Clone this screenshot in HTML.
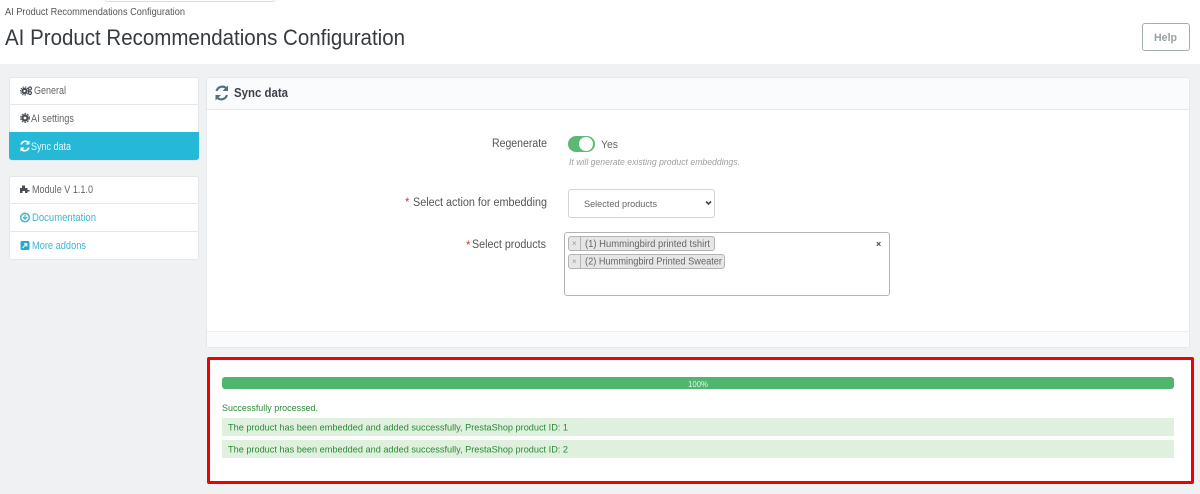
<!DOCTYPE html>
<html><head><meta charset="utf-8"><style>
html,body{margin:0;padding:0;width:1200px;height:494px;overflow:hidden;background:#eff1f2}
body{position:relative;font-family:"Liberation Sans",sans-serif;filter:blur(.35px)}
.b{position:absolute;box-sizing:border-box}
svg.t{position:absolute;left:0;top:0}
text{font-family:"Liberation Sans",sans-serif}
</style></head><body>
<div class="b" style="left:0;top:0;width:1200px;height:64px;background:#fff"></div>
<div class="b" style="left:105px;top:-3px;width:170px;height:5px;border:1px solid #d8e0dc;border-radius:3px"></div>
<div class="b" style="left:1142px;top:23px;width:48px;height:28px;border:1px solid #a3adae;border-radius:3px;background:#fff"></div>

<div class="b" style="left:9px;top:77px;width:190px;height:84px;background:#fff;border:1px solid #e4e8ea;border-radius:3px"></div>
<div class="b" style="left:10px;top:104px;width:188px;height:1px;background:#e4e8ea"></div>
<div class="b" style="left:9px;top:132px;width:190px;height:28px;background:#25b9d7;border-radius:0 0 3px 3px"></div>

<div class="b" style="left:9px;top:176px;width:190px;height:84px;background:#fff;border:1px solid #e4e8ea;border-radius:3px"></div>
<div class="b" style="left:10px;top:203px;width:188px;height:1px;background:#e4e8ea"></div>
<div class="b" style="left:10px;top:231px;width:188px;height:1px;background:#e4e8ea"></div>

<div class="b" style="left:206px;top:77px;width:984px;height:271px;background:#fff;border:1px solid #e4e8ea;border-radius:3px"></div>
<div class="b" style="left:207px;top:78px;width:982px;height:32px;background:#fafbfc;border-bottom:1px solid #e4e8ea"></div>
<div class="b" style="left:207px;top:331px;width:982px;height:16px;background:#fafbfc;border-top:1px solid #e9eeef"></div>

<div class="b" style="left:568px;top:136px;width:27px;height:16px;background:#5cb874;border-radius:8px"></div>
<div class="b" style="left:579px;top:137px;width:14px;height:14px;background:#fff;border-radius:50%"></div>
<div class="b" style="left:568px;top:189px;width:147px;height:29px;background:#fff;border:1px solid #cfd4d6;border-radius:3px"></div>
<div class="b" style="left:564px;top:232px;width:326px;height:64px;background:#fff;border:1px solid #b4b4b4;border-radius:3px"></div>
<div class="b" style="left:568px;top:236px;width:147px;height:15px;background:#e6e6e6;border:1px solid #b4b4b4;border-radius:3px"></div>
<div class="b" style="left:580px;top:236px;width:1px;height:15px;background:#b4b4b4"></div>
<div class="b" style="left:568px;top:254px;width:157px;height:15px;background:#e6e6e6;border:1px solid #b4b4b4;border-radius:3px"></div>
<div class="b" style="left:580px;top:254px;width:1px;height:15px;background:#b4b4b4"></div>

<div class="b" style="left:207px;top:357px;width:987px;height:127px;background:#fff;border:3px solid #f00000;border-radius:2px"></div>
<div class="b" style="left:222px;top:377px;width:952px;height:12px;background:#4fb56f;border-radius:3px"></div>
<div class="b" style="left:222px;top:418px;width:952px;height:18px;background:#dff0df"></div>
<div class="b" style="left:222px;top:440px;width:952px;height:18px;background:#dff0df"></div>

<svg class="t" width="1200" height="494" viewBox="0 0 1200 494">
<text x="5" y="15" font-size="10" fill="#555" textLength="180" lengthAdjust="spacingAndGlyphs">AI Product Recommendations Configuration</text>
<text x="5" y="45" font-size="22.500" fill="#363a41" textLength="400" lengthAdjust="spacingAndGlyphs">AI Product Recommendations Configuration</text>
<text x="1154" y="41" font-size="11" font-weight="bold" fill="#98a2a4" textLength="23" lengthAdjust="spacingAndGlyphs">Help</text>

<text x="34" y="94" font-size="11" fill="#666" textLength="32" lengthAdjust="spacingAndGlyphs">General</text>
<text x="31" y="122" font-size="11" fill="#666" textLength="43" lengthAdjust="spacingAndGlyphs">AI settings</text>
<text x="31" y="150" font-size="11" fill="#e8f8fb" textLength="40" lengthAdjust="spacingAndGlyphs">Sync data</text>
<text x="32" y="193" font-size="11" fill="#666" textLength="61" lengthAdjust="spacingAndGlyphs">Module V 1.1.0</text>
<text x="32" y="221" font-size="11" fill="#3fb5d3" textLength="64" lengthAdjust="spacingAndGlyphs">Documentation</text>
<text x="32" y="249" font-size="11" fill="#3fb5d3" textLength="54" lengthAdjust="spacingAndGlyphs">More addons</text>

<text x="234" y="97" font-size="12.500" font-weight="bold" fill="#3c4148" textLength="54" lengthAdjust="spacingAndGlyphs">Sync data</text>

<text x="492" y="147" font-size="11.500" fill="#555" textLength="55" lengthAdjust="spacingAndGlyphs">Regenerate</text>
<text x="601" y="148" font-size="11" fill="#666" textLength="17" lengthAdjust="spacingAndGlyphs">Yes</text>
<text x="569" y="165" font-size="9" font-style="italic" fill="#a0a0a0" textLength="171" lengthAdjust="spacingAndGlyphs">It will generate existing product embeddings.</text>
<text x="405" y="206" font-size="11.500" fill="#d9333f">*</text>
<text x="413" y="206" font-size="11.500" fill="#555" textLength="134" lengthAdjust="spacingAndGlyphs">Select action for embedding</text>
<text x="584" y="207" font-size="9.500" fill="#666" textLength="73" lengthAdjust="spacingAndGlyphs">Selected products</text>
<path d="M706 201.500l2.500 2.500 2.500-2.500" fill="none" stroke="#444" stroke-width="1.600"/>
<text x="466" y="249" font-size="11.500" fill="#d9333f">*</text>
<text x="472" y="248" font-size="11.500" fill="#555" textLength="74" lengthAdjust="spacingAndGlyphs">Select products</text>
<text x="572" y="246" font-size="8" fill="#999">×</text>
<text x="585" y="247" font-size="10" fill="#666" textLength="125" lengthAdjust="spacingAndGlyphs">(1) Hummingbird printed tshirt</text>
<text x="572" y="264" font-size="8" fill="#999">×</text>
<text x="585" y="264.500" font-size="10" fill="#666" textLength="137" lengthAdjust="spacingAndGlyphs">(2) Hummingbird Printed Sweater</text>
<text x="876" y="247" font-size="9" font-weight="bold" fill="#444">×</text>

<text x="688" y="387" font-size="8.500" fill="#e6f5ea" textLength="20" lengthAdjust="spacingAndGlyphs">100%</text>
<text x="222" y="411" font-size="9.500" fill="#2a8a33" textLength="96" lengthAdjust="spacingAndGlyphs">Successfully processed.</text>
<text x="228" y="430.500" font-size="9.500" fill="#2a8a33" textLength="340" lengthAdjust="spacingAndGlyphs">The product has been embedded and added successfully, PrestaShop product ID: 1</text>
<text x="228" y="452.500" font-size="9.500" fill="#2a8a33" textLength="340" lengthAdjust="spacingAndGlyphs">The product has been embedded and added successfully, PrestaShop product ID: 2</text>

<!-- General: gears -->
<g fill="#4a4f55">
<circle cx="24.500" cy="91" r="3.200"/><circle cx="24.500" cy="91" r="4" fill="none" stroke="#4a4f55" stroke-width="1" stroke-dasharray="1.400 1"/>
<circle cx="30" cy="88.500" r="1.500" fill="none" stroke="#4a4f55" stroke-width="1.200"/>
<circle cx="30" cy="93" r="1.500" fill="none" stroke="#4a4f55" stroke-width="1.200"/>
</g>
<circle cx="24.500" cy="91" r="1.100" fill="#fff"/>
<!-- AI settings: gear -->
<circle cx="25" cy="118" r="3.600" fill="#4a4f55"/><circle cx="25" cy="118" r="4.300" fill="none" stroke="#4a4f55" stroke-width="1.200" stroke-dasharray="1.700 1.100"/>
<circle cx="25" cy="118" r="1.400" fill="#fff"/>
<!-- Sync icons -->
<g fill="none" stroke="#fff" stroke-width="1.700">
<path d="M21.200 144.500a4.200 4.200 0 0 1 7.300-1.700"/><path d="M28.800 147.500a4.200 4.200 0 0 1-7.300 1.700"/>
</g>
<path d="M29.500 140.500v4h-4zM20.500 151.500v-4h4z" fill="#fff"/>
<g fill="none" stroke="#56707c" stroke-width="2.200">
<path d="M216.600 91a5.800 5.800 0 0 1 10-2.300"/><path d="M226.900 95a5.800 5.800 0 0 1-10 2.300"/>
</g>
<path d="M228 85.500v5.500h-5.500zM215.500 100.500v-5.500h5.500z" fill="#56707c"/>
<!-- Module: puzzle -->
<path d="M20 193v-5h2v-2.500h3V188h2.500v2h2v1.500h-2V193h-2.500v-2h-2.500v2z" fill="#4a4f55"/>
<!-- Documentation -->
<circle cx="25" cy="217.500" r="4.300" fill="none" stroke="#3fb5d3" stroke-width="1.500"/>
<path d="M25 214.500v3.500M23 217l2 2.200 2-2.200" fill="none" stroke="#3fb5d3" stroke-width="1.200"/>
<!-- More addons -->
<rect x="20.500" y="241" width="9" height="9" rx="1.500" fill="#25a9d0"/>
<path d="M22.500 248l4-4M24 243.800h2.800v2.800" fill="none" stroke="#fff" stroke-width="1.100"/>
</svg>
</body></html>
